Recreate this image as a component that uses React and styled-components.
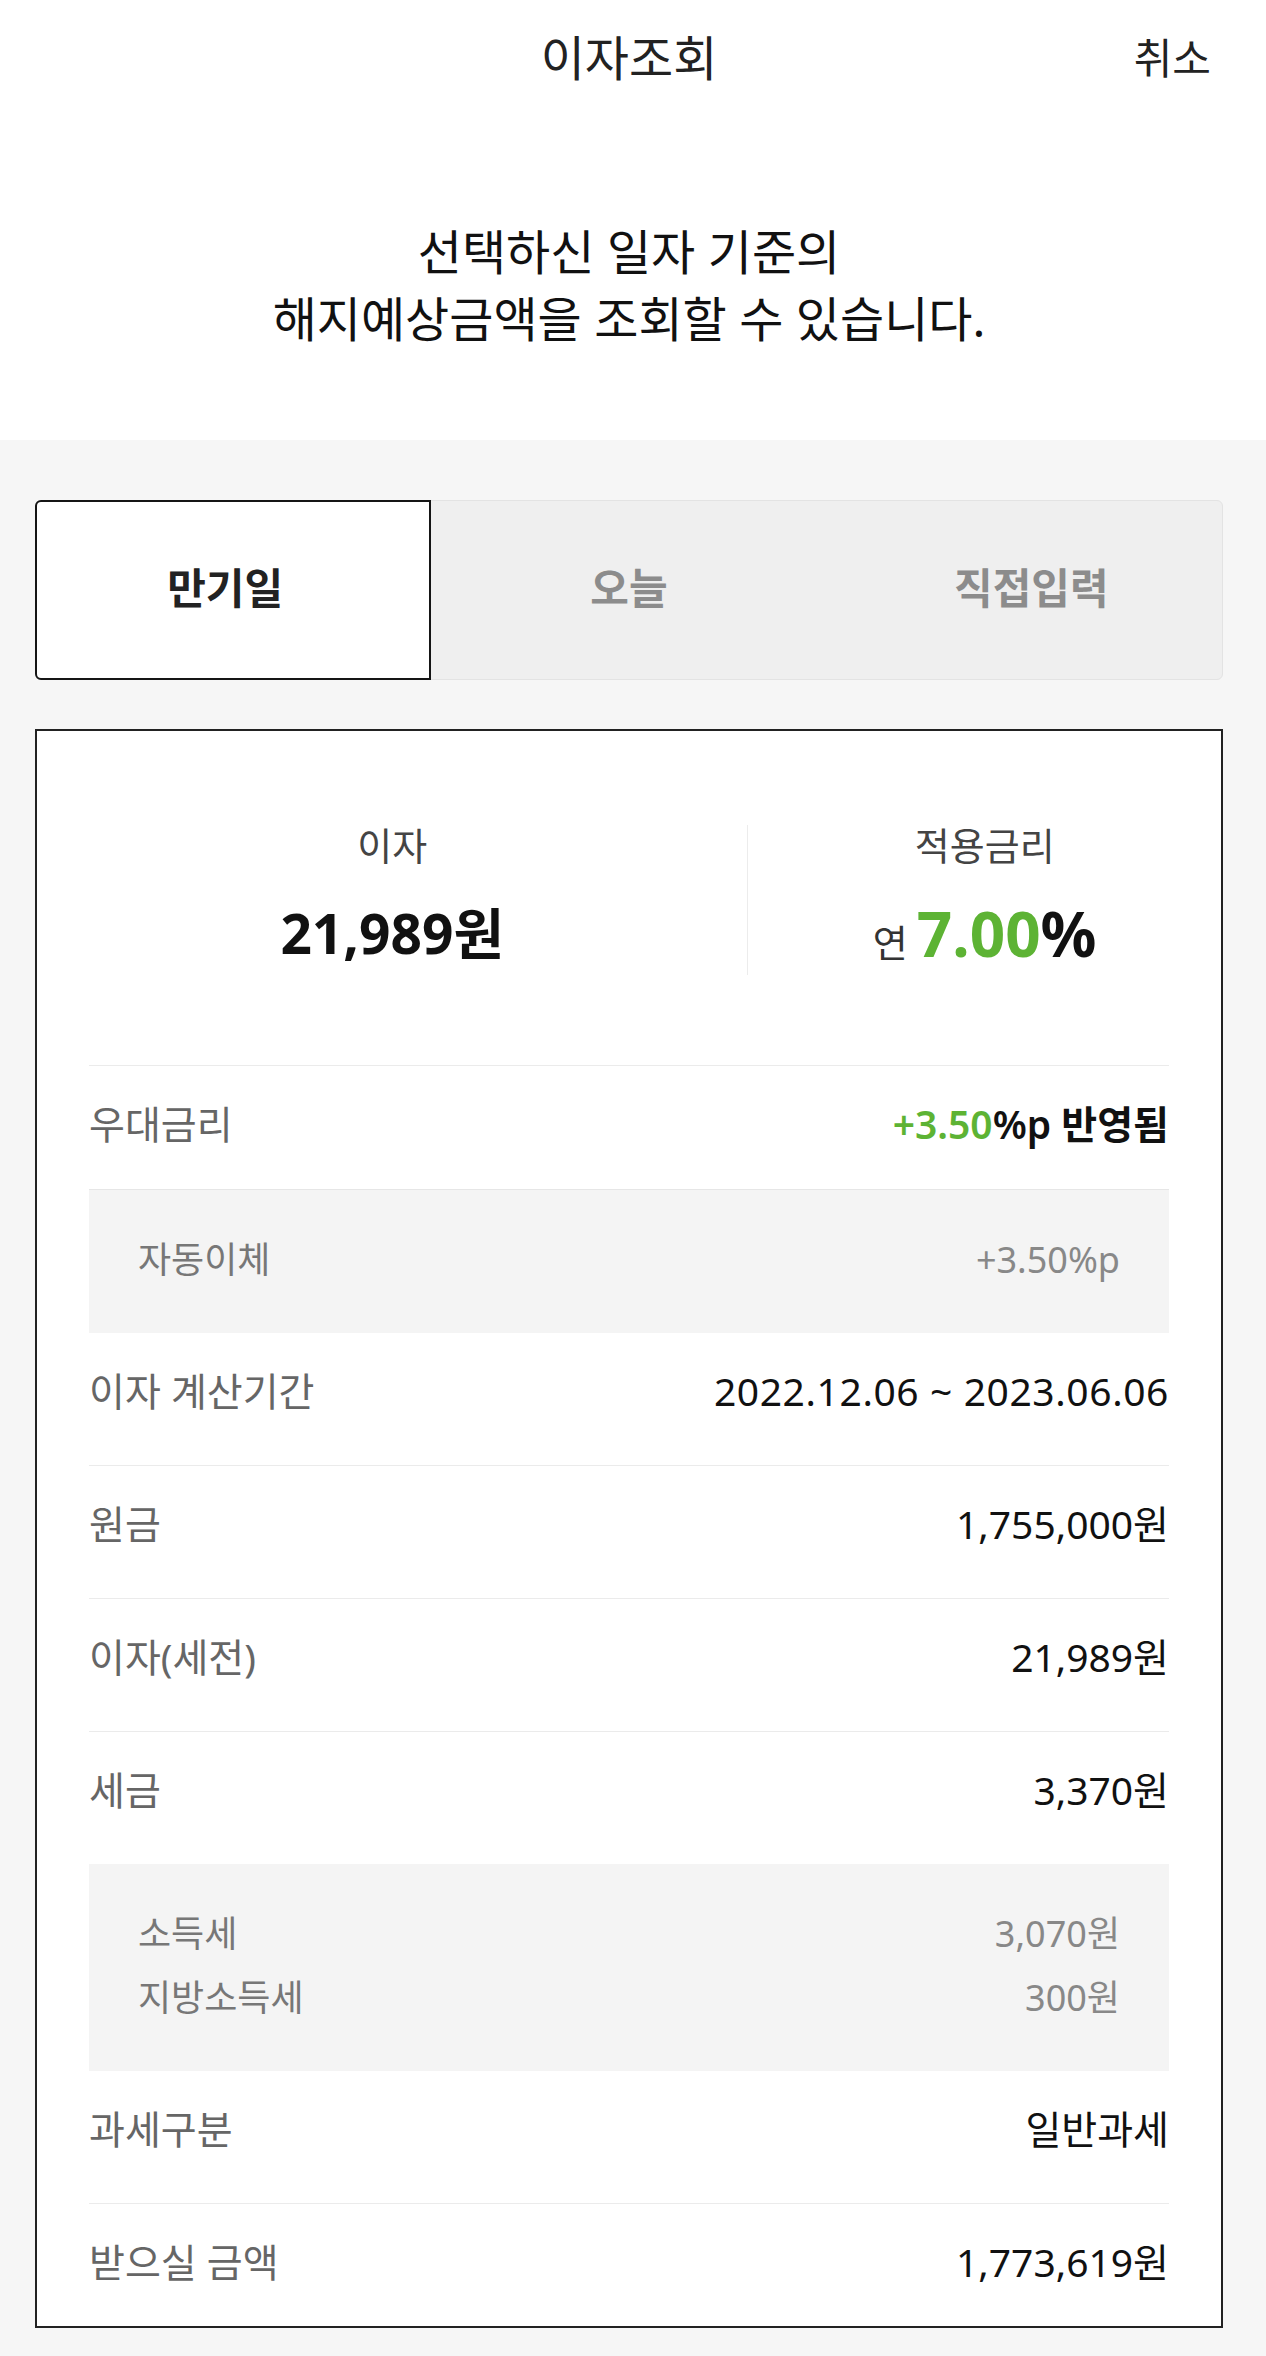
import React from 'react';
import styled, { createGlobalStyle } from 'styled-components';

const GlobalStyle = createGlobalStyle`
  body {
    margin: 0;
    background: #f6f6f6;
    font-family: "Noto Sans", "Noto Sans CJK KR", sans-serif;
    color: #222;
  }
`;

const Page = styled.div`
  width: 1266px;
`;

const Top = styled.section`
  background: #fff;
  height: 440px;
  padding: 0 43px 0 35px;
  box-sizing: border-box;
`;

const TopBar = styled.header`
  height: 110px;
  display: grid;
  grid-template-columns: 1fr auto 1fr;
  align-items: center;
`;

const Title = styled.h1`
  grid-column: 2;
  margin: 0;
  font-size: 48px;
  font-weight: 400;
  color: #222;
`;

const Cancel = styled.button`
  justify-self: end;
  margin-right: 12px;
  padding: 0;
  border: none;
  background: none;
  font-family: inherit;
  font-size: 42px;
  color: #222;
`;

const Notice = styled.p`
  margin: 108px 0 0;
  text-align: center;
  font-size: 48px;
  line-height: 67px;
  color: #111;
`;

const Body = styled.main`
  padding: 60px 43px 27px 35px;
`;

const Tabs = styled.div`
  display: grid;
  grid-template-columns: repeat(3, 1fr);
  height: 180px;
  box-sizing: border-box;
  background: #efefef;
  border: 1px solid #e3e3e3;
  border-radius: 6px;
`;

const Tab = styled.button`
  margin: ${p => (p.$active ? '-1px 0 -1px -1px' : '0')};
  padding: 0 0 10px;
  border: ${p => (p.$active ? '2px solid #151515' : 'none')};
  border-radius: ${p => (p.$active ? '6px 0 0 6px' : '0')};
  background: ${p => (p.$active ? '#fff' : 'transparent')};
  font-family: inherit;
  font-size: 42px;
  font-weight: 700;
  color: ${p => (p.$active ? '#222' : '#8c8c8c')};

  &:first-child {
    padding-right: 16px;
  }

  &:last-child {
    padding-left: 14px;
  }
`;

const Card = styled.section`
  margin-top: 49px;
  background: #fff;
  border: 2px solid #222;
`;

const Summary = styled.div`
  display: grid;
  grid-template-columns: 60% 40%;
  padding: 94px 0 90px;
`;

const SummaryCol = styled.div`
  display: flex;
  flex-direction: column;
  align-items: center;
  height: 150px;
  border-left: ${p => (p.$divided ? '1px solid #ececec' : 'none')};
`;

const SummaryLabel = styled.div`
  font-size: 38px;
  line-height: 40px;
  color: #444;
`;

const SummaryValue = styled.div`
  margin-top: 28px;
  display: flex;
  align-items: baseline;
  font-size: ${p => p.$size}px;
  line-height: 80px;
  font-weight: 700;
  color: #111;
`;

const Prefix = styled.span`
  margin-right: 9px;
  font-size: 38px;
  font-weight: 400;
  color: #333;
`;

const Green = styled.span`
  color: #5db334;
`;

const List = styled.div`
  padding: 0 52px;
`;

const Row = styled.div`
  display: flex;
  justify-content: space-between;
  align-items: center;
  padding: 38px 0 ${p => (p.$tight ? '44px' : '54px')};
  border-top: ${p => (p.$line ? '1px solid #ebebeb' : 'none')};
  font-size: 39px;
  line-height: 40px;
`;

const Label = styled.span`
  color: #666;
`;

const Value = styled.span`
  color: #111;
  font-weight: ${p => (p.$strong ? 600 : 400)};
  letter-spacing: ${p => (p.$wide ? '0.6px' : '0')};
`;

const SubBox = styled.div`
  display: flex;
  flex-direction: column;
  gap: 24px;
  padding: 50px 49px 53px;
  background: #f4f4f4;
  border-top: ${p => (p.$line ? '1px solid #e6e6e6' : 'none')};
  font-size: 36px;
  line-height: 40px;
`;

const SubRow = styled.div`
  display: flex;
  justify-content: space-between;
`;

const SubLabel = styled.span`
  color: #777;
`;

const SubValue = styled.span`
  color: #888;
`;

const tabs = ['만기일', '오늘', '직접입력'];

const rows = [
  { label: '원금', value: '1,755,000원', line: true },
  { label: '이자(세전)', value: '21,989원', line: true },
  { label: '세금', value: '3,370원', line: true },
];

const taxes = [
  { label: '소득세', value: '3,070원' },
  { label: '지방소득세', value: '300원' },
];

const App = () => {
  return (
    <Page>
      <GlobalStyle />
      <Top>
        <TopBar>
          <Title>이자조회</Title>
          <Cancel>취소</Cancel>
        </TopBar>
        <Notice>
          선택하신 일자 기준의
          <br />
          해지예상금액을 조회할 수 있습니다.
        </Notice>
      </Top>

      <Body>
        <Tabs>
          {tabs.map((t, i) => (
            <Tab key={t} $active={i === 0}>{t}</Tab>
          ))}
        </Tabs>

        <Card>
          <Summary>
            <SummaryCol>
              <SummaryLabel>이자</SummaryLabel>
              <SummaryValue $size={55}>21,989원</SummaryValue>
            </SummaryCol>
            <SummaryCol $divided>
              <SummaryLabel>적용금리</SummaryLabel>
              <SummaryValue $size={62}>
                <Prefix>연</Prefix>
                <Green>7.00</Green>%
              </SummaryValue>
            </SummaryCol>
          </Summary>

          <List>
            <Row $line $tight style={{ paddingBottom: 45 }}>
              <Label>우대금리</Label>
              <Value $strong>
                <Green>+3.50</Green>%p 반영됨
              </Value>
            </Row>
            <SubBox $line>
              <SubRow>
                <SubLabel>자동이체</SubLabel>
                <SubValue>+3.50%p</SubValue>
              </SubRow>
            </SubBox>
            <Row>
              <Label>이자 계산기간</Label>
              <Value $wide>2022.12.06 ~ 2023.06.06</Value>
            </Row>
            {rows.map(r => (
              <Row key={r.label} $line={r.line}>
                <Label>{r.label}</Label>
                <Value>{r.value}</Value>
              </Row>
            ))}
            <SubBox>
              {taxes.map(t => (
                <SubRow key={t.label}>
                  <SubLabel>{t.label}</SubLabel>
                  <SubValue>{t.value}</SubValue>
                </SubRow>
              ))}
            </SubBox>
            <Row>
              <Label>과세구분</Label>
              <Value>일반과세</Value>
            </Row>
            <Row $line $tight>
              <Label>받으실 금액</Label>
              <Value>1,773,619원</Value>
            </Row>
          </List>
        </Card>
      </Body>
    </Page>
  );
};

export default App;
